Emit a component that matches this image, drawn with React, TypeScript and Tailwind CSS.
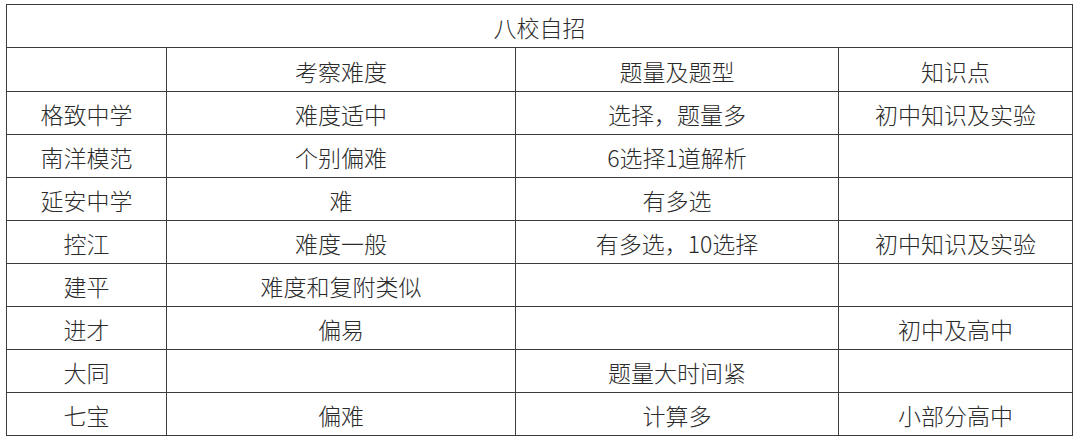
const rows: [string, string, string, string][] = [
  ['格致中学', '难度适中', '选择，题量多', '初中知识及实验'],
  ['南洋模范', '个别偏难', '6选择1道解析', ''],
  ['延安中学', '难', '有多选', ''],
  ['控江', '难度一般', '有多选，10选择', '初中知识及实验'],
  ['建平', '难度和复附类似', '', ''],
  ['进才', '偏易', '', '初中及高中'],
  ['大同', '', '题量大时间紧', ''],
  ['七宝', '偏难', '计算多', '小部分高中'],
];

const cell = 'border border-[#3c3c3c] text-center align-middle pt-[3px]';

export default function App() {
  return (
    <div className="h-[444px] w-[1080px] bg-white pt-[4px] pl-[6px]">
      <table
        className="w-[1066px] table-fixed border-collapse font-light text-[23px] leading-none text-[#2b2b2b]"
        style={{ fontFamily: '"Noto Sans CJK SC", sans-serif' }}
      >
        <colgroup>
          <col className="w-[160px]" />
          <col className="w-[349px]" />
          <col className="w-[323px]" />
          <col className="w-[234px]" />
        </colgroup>
        <tbody>
          <tr className="h-[43px]">
            <td colSpan={4} className={cell}>
              八校自招
            </td>
          </tr>
          <tr className="h-[44px]">
            <td className={cell}></td>
            <td className={cell}>考察难度</td>
            <td className={cell}>题量及题型</td>
            <td className={cell}>知识点</td>
          </tr>
          {rows.map((r, i) => (
            <tr key={i} className="h-[43px]">
              {r.map((c, j) => (
                <td key={j} className={cell}>
                  {c}
                </td>
              ))}
            </tr>
          ))}
        </tbody>
      </table>
    </div>
  );
}
